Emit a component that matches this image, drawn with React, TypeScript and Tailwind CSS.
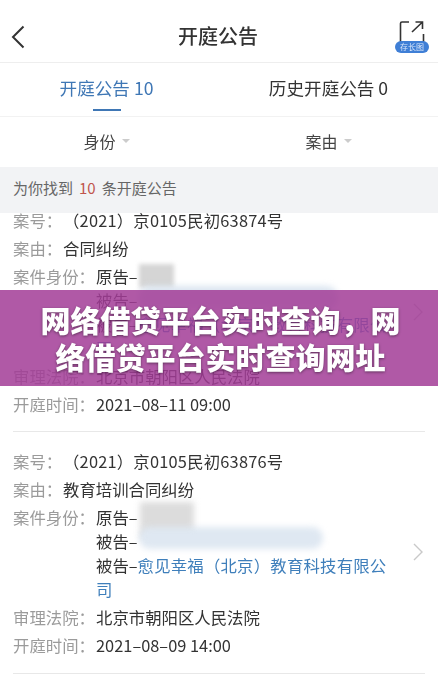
const Row = ({ label, children, gapClass = "w-[83px]" }: { label: string; children: React.ReactNode; gapClass?: string }) => {
  return (
    <div className="flex mb-[4px] text-[16.4px] leading-[24px]">
      <div className={`${gapClass} shrink-0 text-[#9b9b9b]`}>{label}</div>
      <div className="flex-1 text-[#333333]">{children}</div>
    </div>
  );
};

const Chevron = ({ className }: { className: string }) => (
  <svg width="10" height="18" viewBox="0 0 10 18" fill="none" stroke="#c9c9c9" strokeWidth="1.4" className={`absolute right-[2px] ${className}`}>
    <path d="M1 1l8 8-8 8" />
  </svg>
);

const Blur = ({ className }: { className: string }) => <div className={`absolute blur-[3px] ${className}`} />;

const App = () => {
  return (
    <div className="relative w-[438px] h-[676px] overflow-hidden bg-white font-['Noto_Sans_CJK_SC',sans-serif]">
      <div className="blur-[0.4px]">
        {/* header */}
        <div className="relative flex items-center justify-center h-[63px] border-b border-[#eeeeee]">
          <svg width="14" height="24" viewBox="0 0 14 24" fill="none" stroke="#333333" strokeWidth="2" className="absolute left-[11px] top-[25px]">
            <path d="M12.5 1.5L2 12l10.5 10.5" />
          </svg>
          <div className="text-[20px] text-[#333333] font-medium mt-[10px] ml-[-2px]">开庭公告</div>
          <svg width="26" height="26" viewBox="0 0 26 26" fill="none" stroke="#333333" strokeWidth="1.6" className="absolute left-[399px] top-[20px]">
            <path d="M10 2H3a1.5 1.5 0 0 0-1.5 1.5V22M24.5 14v8" />
            <path d="M13 12L23.5 2M16.5 2h7v7" />
          </svg>
          <div className="absolute left-[395px] top-[41px] w-[34px] h-[12px] rounded-full bg-[#3f7fd6] flex items-center justify-center text-[8px] leading-[12px] text-[#d8e6fa]">
            存长图
          </div>
        </div>

        {/* tabs */}
        <div className="grid grid-cols-2 h-[54px] border-b border-[#f2f2f2]">
          <div className="relative flex justify-center pt-[11px] text-[17.6px] leading-[28px] text-[#3f77b5]">
            <span className="mr-[6px]">开庭公告 10</span>
            <div className="absolute left-[93px] bottom-[5px] w-[28px] h-[2px] bg-[#3f77b5]" />
          </div>
          <div className="flex justify-center pt-[11px] text-[17.6px] leading-[28px] text-[#333333]">历史开庭公告 0</div>
        </div>

        {/* filters */}
        <div className="grid grid-cols-2 h-[50px] pb-[2px] text-[16px] text-[#444444]">
          <div className="flex items-center justify-center gap-[6px] mr-[6px]">
            身份
            <span className="w-0 h-0 border-x-[4px] border-x-transparent border-t-[4px] border-t-[#cccccc]" />
          </div>
          <div className="flex items-center justify-center gap-[6px]">
            案由
            <span className="w-0 h-0 border-x-[4px] border-x-transparent border-t-[4px] border-t-[#cccccc]" />
          </div>
        </div>

        {/* count bar */}
        <div className="relative z-10 h-[46px] bg-[#f2f3f5] px-[13px] pb-[3px] flex items-center text-[15px] text-[#666666]">
          为你找到<span className="mx-[6px] text-[#c0554c]">10</span>条开庭公告
        </div>

        {/* list */}
        <div className="px-[13px] -mt-[5px]">
          <div className="relative border-b border-[#e8e8e8] h-[224px]">
            <Row label="案号：" gapClass="w-[50px]">
              <span className="tracking-[0.2px]">（2021）京0105民初63874号</span>
            </Row>
            <Row label="案由：" gapClass="w-[50px]">合同纠纷</Row>
            <Row label="案件身份：">
              原告–
              <br />
              被告–
              <br />
              被告–<span className="text-[#3f7fbb] tracking-[0.2px]">愈见幸福（北京）教育科技有限公</span>
              <br />
              <span className="text-[#3f7fbb]">司</span>
            </Row>
            <Row label="审理法院：">北京市朝阳区人民法院</Row>
            <Row label="开庭时间：">2021–08–11 09:00</Row>
            <div className="absolute left-[126px] top-[56px] w-[35px] h-[24px] bg-[#d5d5d5] blur-[2px]" />
            <div className="absolute left-[125px] top-[78px] w-[200px] h-[24px] rounded-full bg-[#dbe5f0] blur-[3px]" />
            <Chevron className="top-[95px]" />
          </div>

          <div className="relative border-b border-[#e8e8e8] h-[242px] pt-[17px]">
            <Row label="案号：" gapClass="w-[50px]">
              <span className="tracking-[0.2px]">（2021）京0105民初63876号</span>
            </Row>
            <Row label="案由：" gapClass="w-[50px]">教育培训合同纠纷</Row>
            <Row label="案件身份：">
              原告–
              <br />
              被告–
              <br />
              被告–<span className="text-[#3f7fbb] tracking-[0.2px]">愈见幸福（北京）教育科技有限公</span>
              <br />
              <span className="text-[#3f7fbb]">司</span>
            </Row>
            <Row label="审理法院：">北京市朝阳区人民法院</Row>
            <Row label="开庭时间：">2021–08–09 14:00</Row>
            <Blur className="left-[127px] top-[70px] w-[54px] h-[36px] bg-[#dcdcdc]" />
            <Blur className="left-[126px] top-[95px] w-[184px] h-[22px] rounded-full bg-[#dfe8f2]" />
            <Chevron className="top-[111px]" />
          </div>
        </div>
      </div>

      {/* title banner */}
      <div className="absolute left-0 top-[290px] w-full h-[96px] bg-[#a23c96]/85 flex items-center justify-center">
        <div className="w-[366px] ml-[3px] text-center text-[30px] leading-[37.5px] font-black text-white [text-shadow:0_1px_3px_rgba(0,0,0,0.45)]">
          网络借贷平台实时查询，网络借贷平台实时查询网址
        </div>
      </div>
    </div>
  );
};

export default App;
